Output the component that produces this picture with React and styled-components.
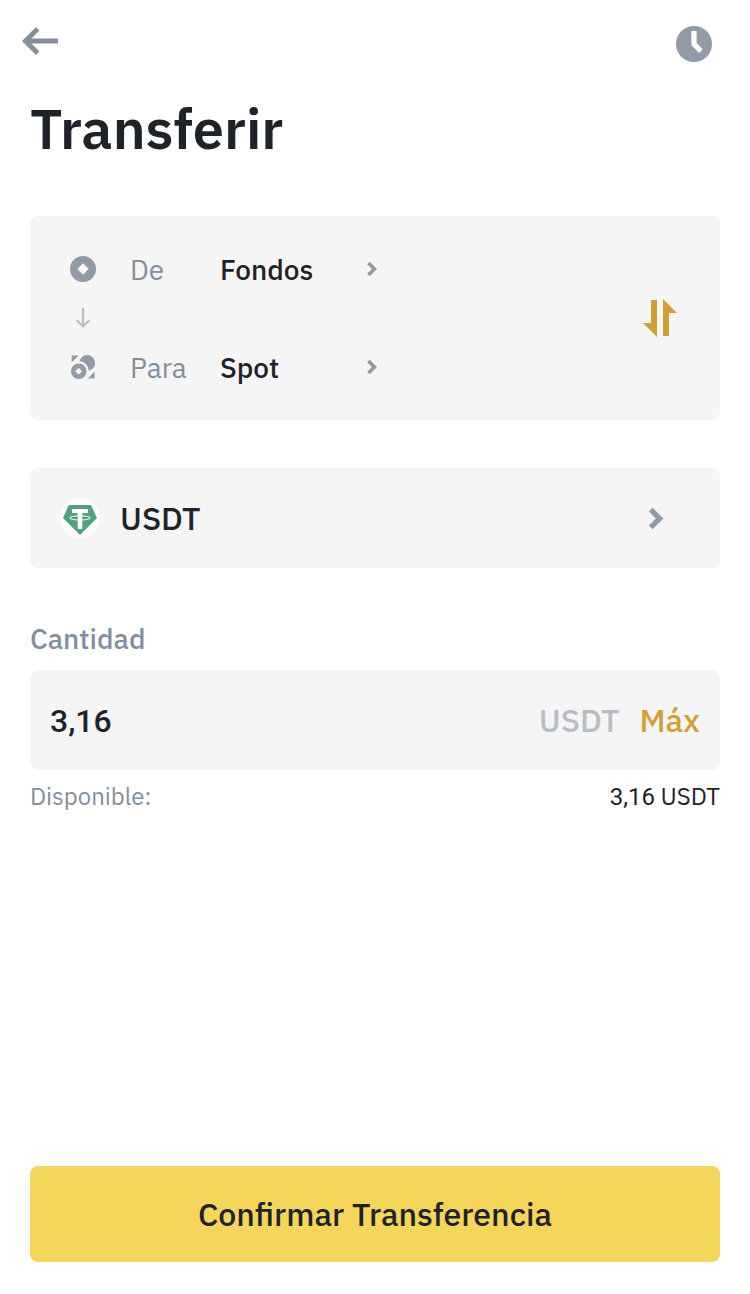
import React, { useState } from "react";
import styled, { createGlobalStyle } from "styled-components";

const color = {
  text: "#1e2329",
  label: "#848e9c",
  icon: "#929aa5",
  faint: "#b7bdc6",
  gold: "#d0a035",
  yellow: "#f5d65a",
  panel: "#f5f5f5",
};

const GlobalStyle = createGlobalStyle`
  *, *::before, *::after { box-sizing: border-box; }
  body {
    margin: 0;
    background: #fff;
    color: ${color.text};
    font-family: "IBM Plex Sans", "Noto Sans", "Liberation Sans", sans-serif;
  }
  button, input { font: inherit; color: inherit; }
  svg { display: block; flex: none; }
`;

const Page = styled.div`
  display: flex;
  flex-direction: column;
  min-height: 100vh;
  padding: 0 30px 32px;
`;

const PlainButton = styled.button`
  padding: 0;
  border: 0;
  background: none;
  cursor: pointer;
`;

const TopBar = styled.header`
  display: flex;
  align-items: center;
  justify-content: space-between;
  height: 88px;
  margin: 0 -8px;
  padding-right: 16px;
`;

const Title = styled.h1`
  margin: 0;
  font-size: 56px;
  font-weight: 600;
  line-height: 80px;
`;

const Content = styled.main`
  display: flex;
  flex-direction: column;
  flex: 1;
  gap: 48px;
  padding-top: 48px;
`;

const Panel = styled.section`
  display: flex;
  align-items: center;
  justify-content: space-between;
  padding: 29px 43px 29px 40px;
  border-radius: 8px;
  background: ${color.panel};
`;

const Route = styled.div`
  display: flex;
  flex-direction: column;
`;

const RouteRow = styled(PlainButton)`
  display: grid;
  grid-template-columns: 60px 90px 146px 12px;
  align-items: center;
  height: 48px;
  text-align: left;
  font-size: 28px;
  line-height: 40px;
`;

const RouteText = styled.span`
  padding-top: 2px;
`;

const RouteLabel = styled(RouteText)`
  color: ${color.label};
`;

const RouteValue = styled(RouteText)`
  font-weight: 500;
`;

const RouteArrow = styled.div`
  display: flex;
  align-items: center;
  height: 50px;
`;

const CoinButton = styled(PlainButton)`
  display: flex;
  align-items: center;
  gap: 20px;
  height: 100px;
  padding: 0 55px 0 30px;
  border-radius: 8px;
  background: ${color.panel};
  font-size: 32px;
  font-weight: 500;
`;

const CoinName = styled.span`
  flex: 1;
  text-align: left;
`;

const Field = styled.div`
  display: flex;
  flex-direction: column;
  gap: 8px;
`;

const FieldLabel = styled.label`
  color: ${color.label};
  font-size: 28px;
  font-weight: 500;
  line-height: 46px;
`;

const AmountBox = styled.div`
  display: flex;
  align-items: center;
  gap: 20px;
  height: 100px;
  padding: 0 20px;
  border-radius: 8px;
  background: ${color.panel};
  font-size: 32px;
  font-weight: 500;
`;

const AmountInput = styled.input`
  flex: 1;
  min-width: 0;
  padding: 2px 0 0;
  border: 0;
  outline: 0;
  background: none;
  font-family: Roboto, sans-serif;
`;

const Unit = styled.span`
  color: ${color.faint};
`;

const MaxButton = styled(PlainButton)`
  color: ${color.gold};
`;

const Balance = styled.div`
  display: flex;
  justify-content: space-between;
  font-size: 24px;
  line-height: 36px;
`;

const BalanceLabel = styled.span`
  color: ${color.label};
`;

const Figure = styled.span`
  font-family: Roboto, sans-serif;
`;

const ConfirmButton = styled(PlainButton)`
  height: 96px;
  border-radius: 8px;
  background: ${color.yellow};
  font-size: 32px;
  font-weight: 500;
`;

const BackIcon = () => (
  <svg width="36" height="36" viewBox="0 0 36 36" fill={color.label} aria-hidden="true">
    <path d="M0 15L14 1L17.5 4.5L9.5 12.4H36V17.6H9.5L17.5 25.5L14 29Z" />
  </svg>
);

const ClockIcon = () => (
  <svg width="36" height="36" viewBox="0 0 36 36" fill="none" aria-hidden="true">
    <circle cx="18" cy="18" r="18" fill={color.icon} />
    <path d="M18 5V18.2L25 25.2" stroke="#fff" strokeWidth="5.2" />
  </svg>
);

const FundingIcon = () => (
  <svg width="26" height="26" viewBox="0 0 26 26" aria-hidden="true">
    <circle cx="13" cy="13" r="13" fill={color.icon} />
    <path d="M13 7.3L18.7 13L13 18.7L7.3 13Z" fill={color.panel} />
  </svg>
);

const SpotIcon = () => (
  <svg width="26" height="26" viewBox="0 0 26 26" fill={color.icon} aria-hidden="true">
    <circle cx="17.2" cy="9" r="7.9" />
    <circle cx="8.7" cy="17.3" r="10.2" fill={color.panel} />
    <path d="M1.6 1.4H8.6L1.6 8.4Z" />
    <circle cx="8.7" cy="17.3" r="7.8" />
    <path d="M8.7 13.8L12.2 17.3L8.7 20.8L5.2 17.3Z" fill={color.panel} />
    <path d="M24.6 17.6V24.4H17.8Z" />
  </svg>
);

const DownIcon = () => (
  <svg width="26" height="22" viewBox="0 0 26 22" fill="none" stroke={color.faint} strokeWidth="2.2" aria-hidden="true">
    <path d="M13 1V20M6.7 13.2L13 19.5L19.3 13.2" />
  </svg>
);

const ChevronIcon = ({ size }) => (
  <svg width={size} height={size * 1.5} viewBox="0 0 12 18" fill={color.icon} aria-hidden="true">
    <path d="M1.2 4.3L3.7 1.8L11 9L3.7 16.2L1.2 13.7L5.9 9Z" />
  </svg>
);

const SwapIcon = () => (
  <svg width="34" height="38" viewBox="0 0 34 38" fill={color.gold} aria-hidden="true">
    <path d="M8 1H14V38L0 24H8Z" />
    <path d="M20 0L34 14H26V37H20Z" />
  </svg>
);

const TetherIcon = () => (
  <svg width="40" height="40" viewBox="0 0 40 40" aria-hidden="true">
    <circle cx="20" cy="20" r="20" fill="#fff" />
    <path d="M8.8 7H31L37 20L20 37L3 20Z" fill="#50a17f" />
    <path d="M12 11H28V15H22.3V31H17.7V15H12Z" fill="#fff" />
    <ellipse cx="20" cy="20" rx="10.3" ry="2.1" fill="none" stroke="#fff" />
  </svg>
);

export default function App() {
  const [accounts, setAccounts] = useState(["Fondos", "Spot"]);
  const [amount, setAmount] = useState("3,16");

  return (
    <Page>
      <GlobalStyle />
      <TopBar>
        <PlainButton type="button" aria-label="Volver"><BackIcon /></PlainButton>
        <PlainButton type="button" aria-label="Historial"><ClockIcon /></PlainButton>
      </TopBar>
      <Title>Transferir</Title>
      <Content>
        <Panel>
          <Route>
            <RouteRow type="button">
              <FundingIcon />
              <RouteLabel>De</RouteLabel>
              <RouteValue>{accounts[0]}</RouteValue>
              <ChevronIcon size={12} />
            </RouteRow>
            <RouteArrow><DownIcon /></RouteArrow>
            <RouteRow type="button">
              <SpotIcon />
              <RouteLabel>Para</RouteLabel>
              <RouteValue>{accounts[1]}</RouteValue>
              <ChevronIcon size={12} />
            </RouteRow>
          </Route>
          <PlainButton type="button" aria-label="Intercambiar" onClick={() => setAccounts([accounts[1], accounts[0]])}>
            <SwapIcon />
          </PlainButton>
        </Panel>
        <CoinButton type="button">
          <TetherIcon />
          <CoinName>USDT</CoinName>
          <ChevronIcon size={18} />
        </CoinButton>
        <Field>
          <FieldLabel htmlFor="amount">Cantidad</FieldLabel>
          <AmountBox>
            <AmountInput id="amount" inputMode="decimal" value={amount} onChange={(e) => setAmount(e.target.value)} />
            <Unit>USDT</Unit>
            <MaxButton type="button" onClick={() => setAmount("3,16")}>Máx</MaxButton>
          </AmountBox>
          <Balance>
            <BalanceLabel>Disponible:</BalanceLabel>
            <span><Figure>3,16</Figure> USDT</span>
          </Balance>
        </Field>
      </Content>
      <ConfirmButton type="button">Confirmar Transferencia</ConfirmButton>
    </Page>
  );
}
